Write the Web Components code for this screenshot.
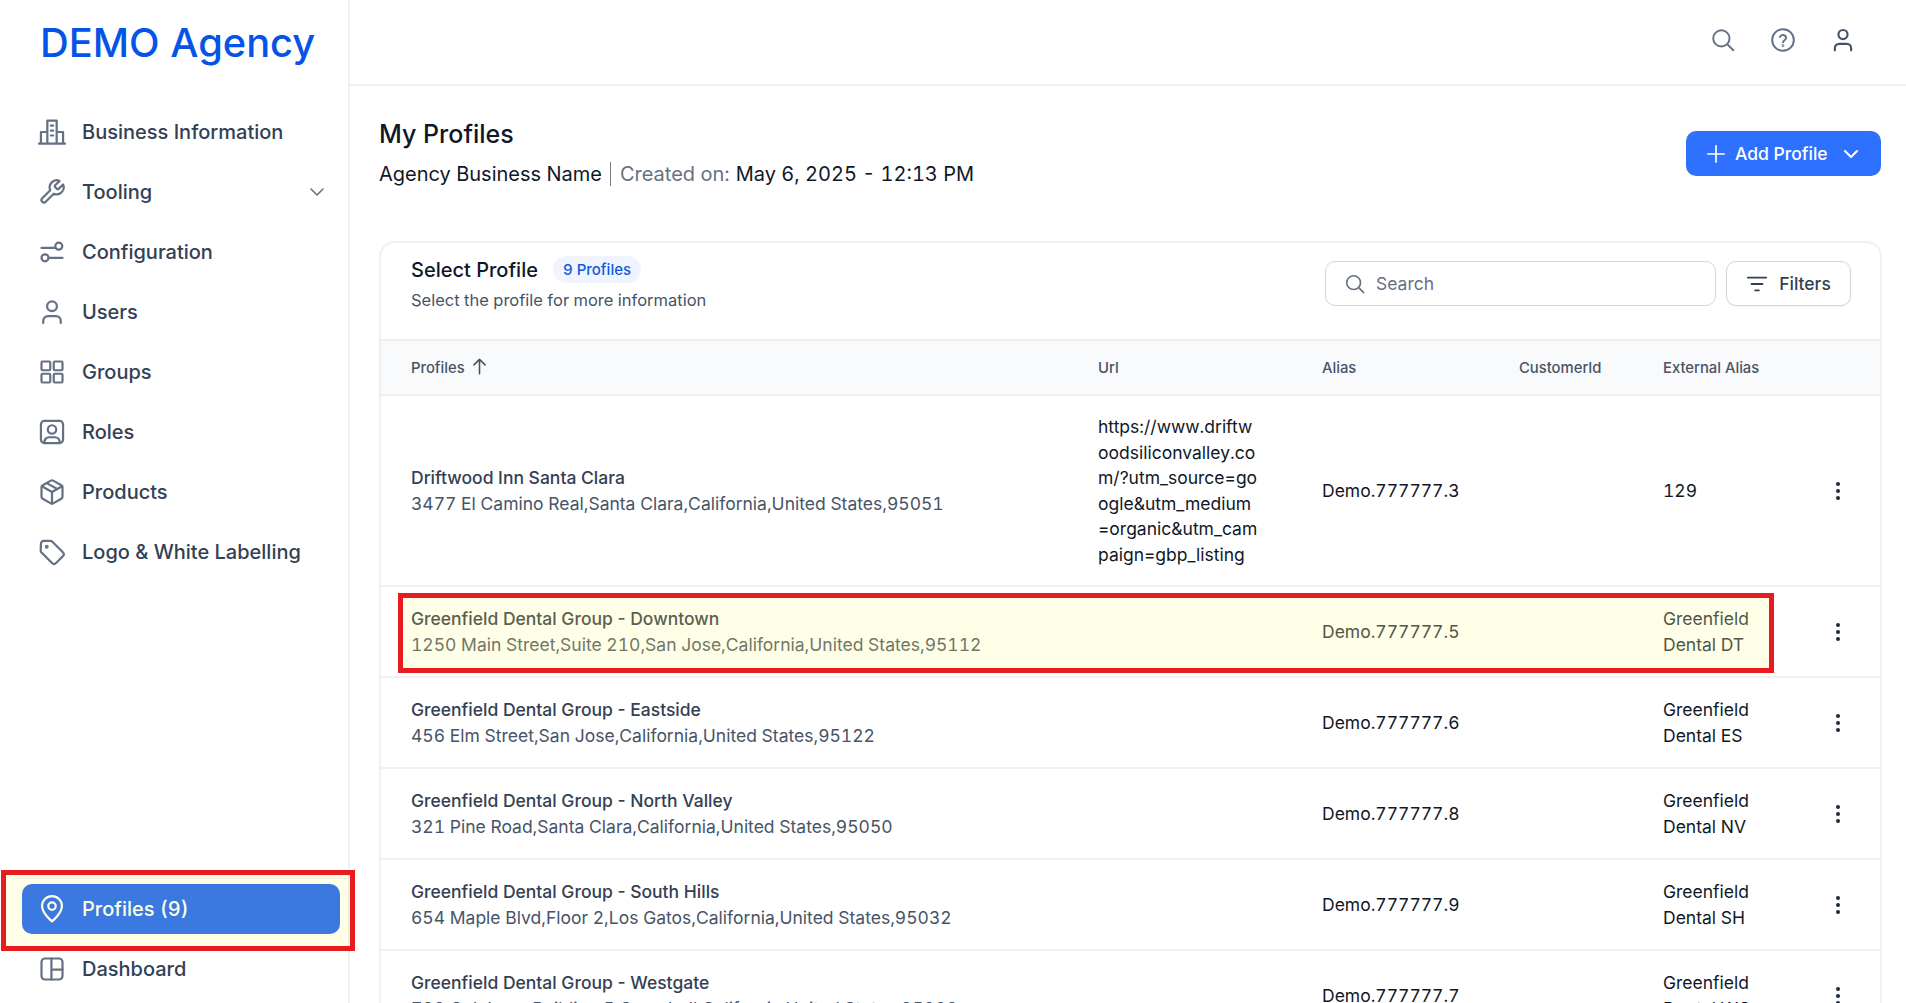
<!DOCTYPE html>
<html lang="en">
<head>
<meta charset="utf-8">
<title>My Profiles</title>
<style>
  html, body { margin: 0; height: 100%; overflow: hidden; background: #fff; }
  body { font-family: Inter, "Liberation Sans", sans-serif; color: #101828; font-variant-numeric: tabular-nums; }
</style>
</head>
<body>
<agency-app></agency-app>

<script>
const ICONS = {
  building: '<path d="M.8 22h22.4M2.5 22V12h5.5M21.5 22V12H16M8 22V2.2h8V22M11 6.5h2M11 10.8h2M11 15h2"/>',
  wrench: '<path d="M14.7 6.3a1 1 0 0 0 0 1.4l1.6 1.6a1 1 0 0 0 1.4 0l3.77-3.77a6 6 0 0 1-7.94 7.94l-6.91 6.91a2.12 2.12 0 0 1-3-3l6.91-6.91a6 6 0 0 1 7.94-7.94l-3.76 3.76z"/>',
  config: '<path d="M3 8.5h11M10 17h11"/><circle cx="17.8" cy="7" r="3"/><circle cx="6" cy="17" r="3"/>',
  user: '<circle cx="12" cy="7" r="4.2"/><path d="M4.5 21.5v-2a4 4 0 0 1 4-4h7a4 4 0 0 1 4 4v2"/>',
  grid: '<rect x="3" y="3" width="7.5" height="7.5" rx="1"/><rect x="13.5" y="3" width="7.5" height="7.5" rx="1"/><rect x="3" y="13.5" width="7.5" height="7.5" rx="1"/><rect x="13.5" y="13.5" width="7.5" height="7.5" rx="1"/>',
  role: '<rect x="2.5" y="2.5" width="19" height="19" rx="3"/><circle cx="12" cy="9.8" r="3.6"/><path d="M5.5 21.5v-1a4 4 0 0 1 4-4h5a4 4 0 0 1 4 4v1"/>',
  box: '<path d="M21 16V8a2 2 0 0 0-1-1.73l-7-4a2 2 0 0 0-2 0l-7 4A2 2 0 0 0 3 8v8a2 2 0 0 0 1 1.73l7 4a2 2 0 0 0 2 0l7-4A2 2 0 0 0 21 16z"/><path d="M3.3 7 12 12l8.7-5M12 22V12M7.5 4.4l9 5.1"/>',
  tag: '<path d="M2.5 5a2.5 2.5 0 0 1 2.5-2.5h5.5a2.5 2.5 0 0 1 1.8.7l9 9a2.5 2.5 0 0 1 0 3.5l-5.8 5.8a2.5 2.5 0 0 1-3.5 0l-9-9a2.5 2.5 0 0 1-.7-1.8z"/><circle cx="7.5" cy="7.5" r=".7"/>',
  pin: '<path d="M12 22.5s8.5-6.6 8.5-13a8.5 8.5 0 0 0-17 0c0 6.4 8.5 13 8.5 13z"/><circle cx="12" cy="9.5" r="3.2"/>',
  panel: '<rect x="3" y="3" width="18" height="18" rx="3"/><path d="M11.5 3v18M11.5 12.5H21"/>',
  chevron: '<path d="m6 9 6 6 6-6"/>',
  search: '<circle cx="10.5" cy="10.5" r="7.5"/><path d="m16 16 5.5 5.5"/>',
  help: '<circle cx="12" cy="12" r="10"/><path d="M9.2 9.2a2.9 2.9 0 0 1 5.6 1c0 1.9-2.8 2.4-2.8 3.8"/><circle cx="12" cy="17.2" r=".4"/>',
  plus: '<path d="M12 3v18M3 12h18"/>',
  up: '<path d="M12 21V3M5 10l7-7 7 7"/>',
  filter: '<path d="M2 5h20M6 12h12M10 19h4"/>',
};

function icon(name, size, stroke = 2) {
  return `<svg width="${size}" height="${size}" viewBox="0 0 24 24" fill="none" stroke="currentColor" stroke-width="${stroke}" stroke-linecap="round" stroke-linejoin="round" aria-hidden="true">${ICONS[name]}</svg>`;
}

class NavItem extends HTMLElement {
  constructor() {
    super();
    const chevron = this.hasAttribute('expandable')
      ? `<span class="chev">${icon('chevron', 24, 1.6)}</span>` : '';
    this.attachShadow({ mode: 'open' }).innerHTML = `
      <style>
        :host {
          display: flex;
          align-items: center;
          gap: 16px;
          height: 50px;
          padding: 0 11px 0 16px;
          border-radius: 10px;
          font-size: 20px;
          font-weight: 500;
          color: #344054;
        }
        :host([active]) { background: #286bf6; color: #fff; }
        .ic { display: flex; color: #667085; }
        :host([active]) .ic { color: #fff; }
        .label { flex: 1; white-space: nowrap; }
        .chev { display: flex; color: #667085; }
      </style>
      <span class="ic">${icon(this.getAttribute('icon'), 28, 1.9)}</span>
      <span class="label"><slot></slot></span>
      ${chevron}
    `;
  }
}
customElements.define('nav-item', NavItem);

class SideNav extends HTMLElement {
  constructor() {
    super();
    this.attachShadow({ mode: 'open' }).innerHTML = `
      <style>
        :host {
          display: flex;
          flex-direction: column;
          flex: none;
          box-sizing: border-box;
          width: 350px;
          height: 1003px;
          border-right: 2px solid #eef0f2;
        }
        .logo {
          height: 85px;
          padding-left: 40px;
          font-size: 39.8px;
          font-weight: 500;
          line-height: 85px;
          color: #0553e8;
          white-space: nowrap;
        }
        nav {
          display: flex;
          flex-direction: column;
          gap: 10px;
          flex: 1;
          padding: 22px 8px 0 22px;
        }
        .foot {
          position: relative;
          display: flex;
          flex-direction: column;
          gap: 10px;
          margin-left: 14px;
          padding: 5px 8px 9px 8px;
          border-top: 1px solid #eceef0;
        }
        .mark {
          position: absolute;
          top: -9px;
          left: -13px;
          width: 354px;
          height: 81px;
          box-sizing: border-box;
          border: 5px solid #e81c1f;
          background: rgba(255, 255, 0, .09);
          pointer-events: none;
        }
      </style>
      <div class="logo">DEMO Agency</div>
      <nav>
        <nav-item icon="building">Business Information</nav-item>
        <nav-item icon="wrench" expandable>Tooling</nav-item>
        <nav-item icon="config">Configuration</nav-item>
        <nav-item icon="user">Users</nav-item>
        <nav-item icon="grid">Groups</nav-item>
        <nav-item icon="role">Roles</nav-item>
        <nav-item icon="box">Products</nav-item>
        <nav-item icon="tag">Logo &amp; White Labelling</nav-item>
      </nav>
      <div class="foot">
        <nav-item icon="pin" active>Profiles (9)</nav-item>
        <nav-item icon="panel">Dashboard</nav-item>
        <div class="mark"></div>
      </div>
    `;
  }
}
customElements.define('side-nav', SideNav);

class TopBar extends HTMLElement {
  constructor() {
    super();
    this.attachShadow({ mode: 'open' }).innerHTML = `
      <style>
        :host {
          display: flex;
          align-items: center;
          justify-content: flex-end;
          gap: 34px;
          flex: none;
          box-sizing: border-box;
          height: 86px;
          padding: 0 50px 5px 0;
          border-bottom: 2px solid #eef0f2;
        }
        span { display: flex; width: 26px; justify-content: center; }
        .a { color: #667085; }
        .b { color: #475467; }
      </style>
      <span class="a">${icon('search', 26, 1.8)}</span>
      <span class="a">${icon('help', 26, 1.8)}</span>
      <span class="b">${icon('user', 26, 2)}</span>
    `;
  }
}
customElements.define('top-bar', TopBar);

class PageHead extends HTMLElement {
  constructor() {
    super();
    this.attachShadow({ mode: 'open' }).innerHTML = `
      <style>
        :host {
          display: flex;
          align-items: flex-start;
          justify-content: space-between;
          padding-top: 32px;
        }
        h1 {
          margin: 0 0 9px;
          font-size: 25px;
          line-height: 32px;
          font-weight: 500;
          color: #101828;
        }
        .sub {
          display: flex;
          align-items: center;
          font-size: 20px;
          line-height: 30px;
          color: #101828;
          white-space: nowrap;
        }
        .sep {
          width: 1px;
          height: 24px;
          margin: 0 9px 0 8px;
          background: #7a7a78;
        }
        .muted { margin-right: 6px; color: #667085; }
        button {
          display: flex;
          align-items: center;
          box-sizing: border-box;
          width: 195px;
          height: 45px;
          margin: 13px 1px 0 0;
          padding: 0 0 0 19px;
          border: none;
          border-radius: 10px;
          background: #2e71fe;
          color: #fff;
          font: 500 17.5px Inter, "Liberation Sans", sans-serif;
        }
        button svg:first-child { margin-right: 8px; }
        button span { margin-right: 11px; white-space: nowrap; }
      </style>
      <div>
        <h1>My Profiles</h1>
        <div class="sub">Agency Business Name<i class="sep"></i><span class="muted">Created on:</span>May 6, 2025 - 12:13 PM</div>
      </div>
      <button>${icon('plus', 22, 1.8)}<span>Add Profile</span>${icon('chevron', 24, 2)}</button>
    `;
  }
}
customElements.define('page-head', PageHead);

// column widths shared by the head row and the profile rows
const COLS = 'grid-template-columns: 687px 224px 197px 144px 1fr;';

class ProfileRow extends HTMLElement {
  constructor() {
    super();
    const get = (n) => this.getAttribute(n) || '';
    this.attachShadow({ mode: 'open' }).innerHTML = `
      <style>
        :host {
          position: relative;
          display: grid;
          ${COLS}
          align-items: center;
          box-sizing: border-box;
          min-height: 91px;
          padding-left: 30px;
          border-bottom: 2px solid #eef0f2;
          font-size: 17.5px;
          line-height: 25.5px;
          color: #101828;
        }
        :host([marked]) { color: #3f4650; }
        .name { font-weight: 500; color: #344054; font-variant-numeric: normal; }
        :host([marked]) .name { color: #4a505a; }
        .addr { color: #475467; }
        :host([marked]) .addr { color: #636a72; }
        .url { width: 162px; padding: 18px 0; word-break: break-all; }
        .ext { width: 120px; }
        .last { display: flex; align-items: center; justify-content: space-between; }
        .mark {
          position: absolute;
          top: 6px;
          left: 17px;
          width: 1376px;
          height: 80px;
          box-sizing: border-box;
          border: 5px solid #e81c1f;
          background: rgba(255, 255, 0, .09);
        }
        .dots { display: flex; padding-right: 39px; color: #1d2939; }
      </style>
      <div><div class="name">${get('name')}</div><div class="addr">${get('address')}</div></div>
      <div class="url">${get('url')}</div>
      <div>${get('alias')}</div>
      <div></div>
      <div class="last">
        <div class="ext">${get('external')}</div>
        <div class="dots"><svg width="6" height="20" viewBox="0 0 6 20" fill="currentColor"><circle cx="3" cy="3" r="2"/><circle cx="3" cy="10" r="2"/><circle cx="3" cy="17" r="2"/></svg></div>
      </div>
      ${this.hasAttribute('marked') ? '<div class="mark"></div>' : ''}
    `;
  }
}
customElements.define('profile-row', ProfileRow);

class ProfileCard extends HTMLElement {
  constructor() {
    super();
    this.attachShadow({ mode: 'open' }).innerHTML = `
      <style>
        :host {
          display: block;
          margin-top: 52px;
          border: 2px solid #eef0f2;
          border-bottom: none;
          border-radius: 16px 16px 0 0;
        }
        .top {
          display: flex;
          align-items: center;
          box-sizing: border-box;
          height: 96px;
          padding: 0 29px 15px 30px;
        }
        .titles { flex: 1; }
        .line { display: flex; align-items: center; gap: 15px; height: 30px; margin: -1px 0 3px; }
        h2 { margin: 0; font-size: 20px; font-weight: 500; color: #101828; }
        .pill {
          padding: 0 10px;
          height: 27px;
          line-height: 27px;
          border-radius: 14px;
          background: #eff4ff;
          color: #0f5bdc;
          font-size: 15px;
          font-weight: 500;
        }
        .hint { font-size: 16.5px; line-height: 24px; color: #475467; }
        .search {
          display: flex;
          align-items: center;
          gap: 10px;
          box-sizing: border-box;
          width: 391px;
          height: 45px;
          margin-right: 10px;
          padding-left: 18px;
          border: 1px solid #d0d5dd;
          border-radius: 10px;
          color: #667085;
          font-size: 17.5px;
        }
        .filters {
          display: flex;
          align-items: center;
          justify-content: center;
          gap: 11px;
          box-sizing: border-box;
          width: 125px;
          height: 45px;
          border: 1px solid #d0d5dd;
          border-radius: 10px;
          box-shadow: 0 1px 2px rgba(16, 24, 40, .05);
          color: #344054;
          font-size: 17.5px;
          font-weight: 500;
        }
        .head {
          display: grid;
          ${COLS}
          align-items: center;
          box-sizing: border-box;
          height: 57px;
          padding-left: 30px;
          border-top: 2px solid #eef0f2;
          border-bottom: 2px solid #eef0f2;
          background: #f9fafb;
          font-size: 14.8px;
          font-weight: 500;
          color: #475467;
        }
        .sort { display: flex; align-items: center; gap: 5px; }
        .sort svg { margin-top: -3px; }
      </style>
      <div class="top">
        <div class="titles">
          <div class="line"><h2>Select Profile</h2><span class="pill">9 Profiles</span></div>
          <div class="hint">Select the profile for more information</div>
        </div>
        <div class="search">${icon('search', 22, 1.8)}<span>Search</span></div>
        <div class="filters">${icon('filter', 22, 2)}<span>Filters</span></div>
      </div>
      <div class="head">
        <div class="sort">Profiles ${icon('up', 19, 2)}</div>
        <div>Url</div>
        <div>Alias</div>
        <div>CustomerId</div>
        <div>External Alias</div>
      </div>
      <slot></slot>
    `;
  }
}
customElements.define('profile-card', ProfileCard);

class AgencyApp extends HTMLElement {
  constructor() {
    super();
    this.attachShadow({ mode: 'open' }).innerHTML = `
      <style>
        :host { display: flex; width: 1906px; height: 1003px; overflow: hidden; }
        .main { display: flex; flex-direction: column; flex: 1; min-width: 0; }
        .body { padding: 0 24px 0 29px; }
      </style>
      <side-nav></side-nav>
      <div class="main">
        <top-bar></top-bar>
        <div class="body">
          <page-head></page-head>
          <profile-card>
            <profile-row name="Driftwood Inn Santa Clara" address="3477 El Camino Real,Santa Clara,California,United States,95051" url="https://www.driftwoodsiliconvalley.com/?utm_source=google&amp;utm_medium=organic&amp;utm_campaign=gbp_listing" alias="Demo.777777.3" external="129"></profile-row>
            <profile-row marked name="Greenfield Dental Group - Downtown" address="1250 Main Street,Suite 210,San Jose,California,United States,95112" alias="Demo.777777.5" external="Greenfield Dental DT"></profile-row>
            <profile-row name="Greenfield Dental Group - Eastside" address="456 Elm Street,San Jose,California,United States,95122" alias="Demo.777777.6" external="Greenfield Dental ES"></profile-row>
            <profile-row name="Greenfield Dental Group - North Valley" address="321 Pine Road,Santa Clara,California,United States,95050" alias="Demo.777777.8" external="Greenfield Dental NV"></profile-row>
            <profile-row name="Greenfield Dental Group - South Hills" address="654 Maple Blvd,Floor 2,Los Gatos,California,United States,95032" alias="Demo.777777.9" external="Greenfield Dental SH"></profile-row>
            <profile-row name="Greenfield Dental Group - Westgate" address="789 Oak Lane,Building 5,Campbell,California,United States,95008" alias="Demo.777777.7" external="Greenfield Dental WG"></profile-row>
          </profile-card>
        </div>
      </div>
    `;
  }
}
customElements.define('agency-app', AgencyApp);
</script>
</body>
</html>
